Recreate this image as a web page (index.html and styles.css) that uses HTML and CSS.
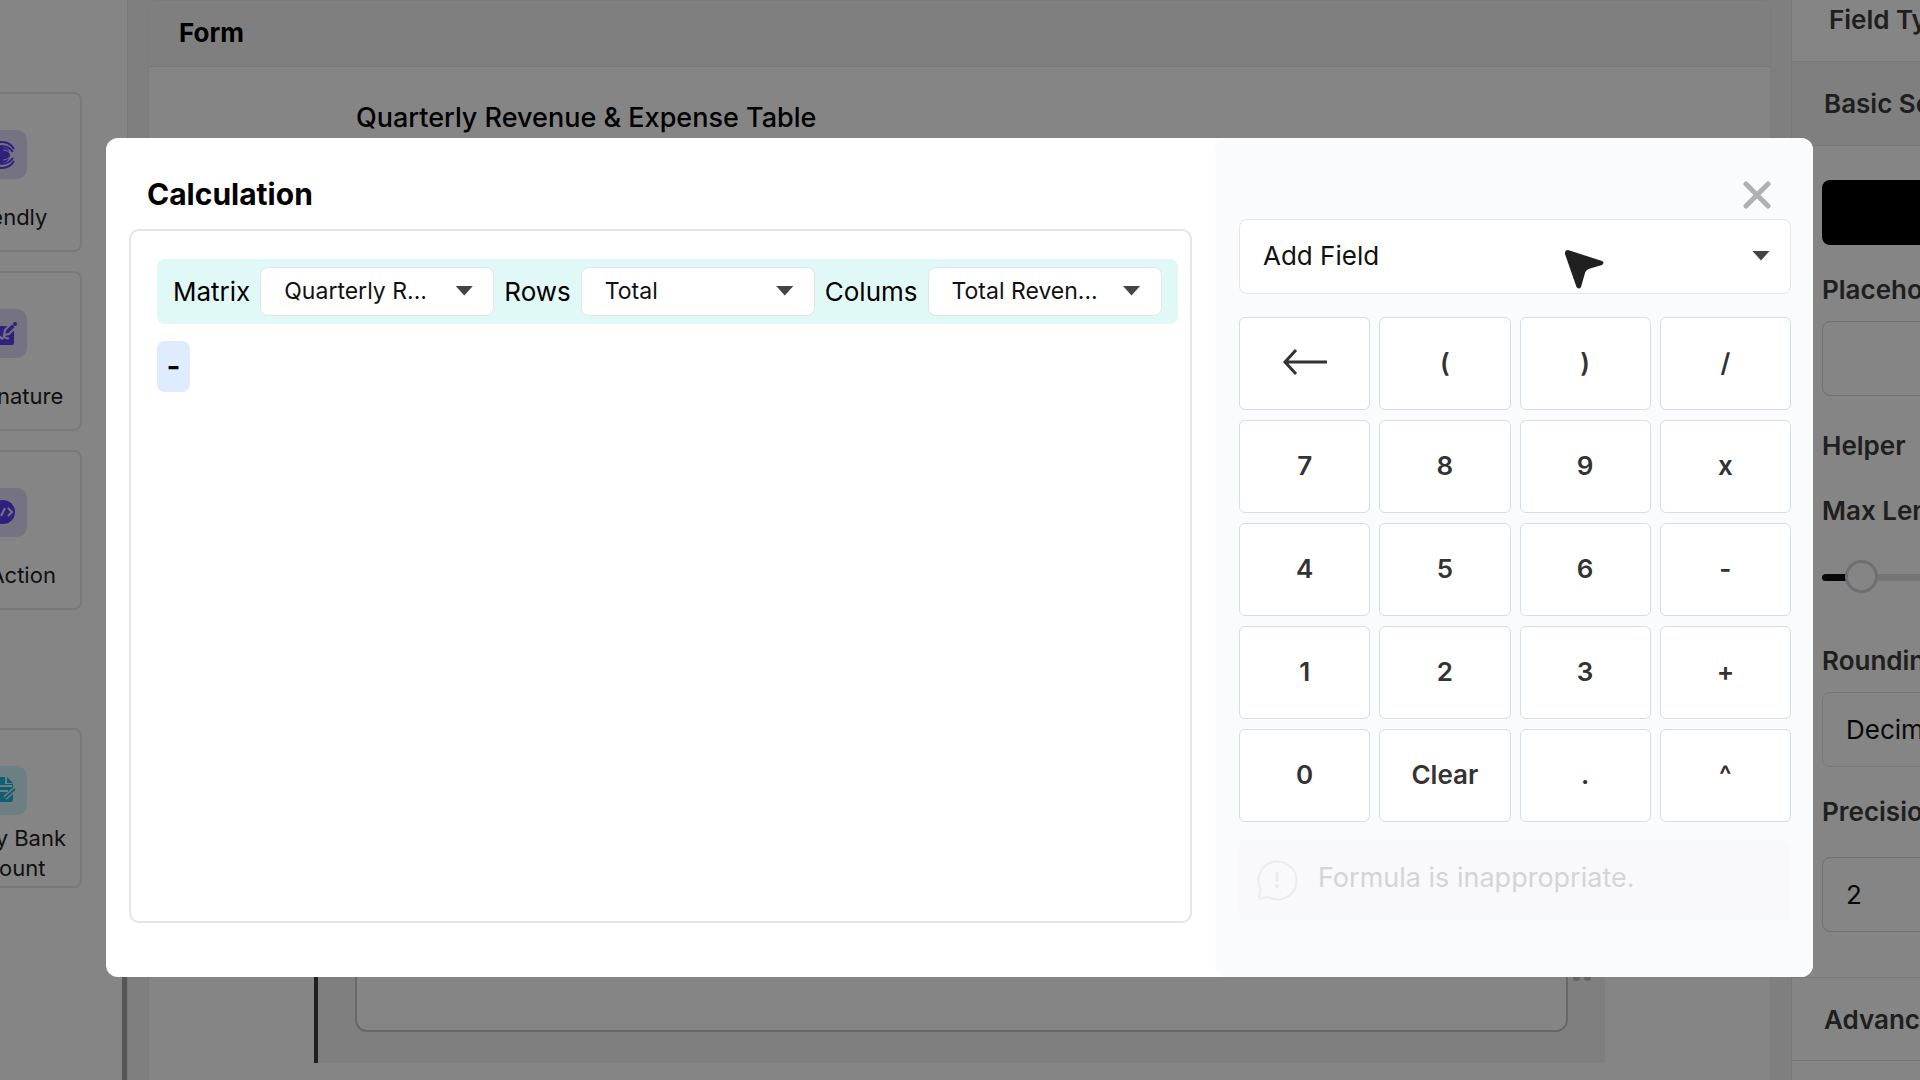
FILE: index.html
```html
<!DOCTYPE html>
<html lang="en">
<head>
    <meta charset="UTF-8">
    <meta name="viewport" content="width=device-width, initial-scale=1.0">
    <title>Form Builder - Calculation</title>
    <link rel="stylesheet" href="styles.css">
</head>
<body>
    <div class="builder">
        <aside class="widgets">
            <div class="widget">
                <span class="widget-icon">
                    <svg viewBox="0 0 49 49" width="49" height="49" fill="none" stroke="currentColor">
                        <circle cx="24" cy="25" r="8" fill="currentColor" stroke="none"/>
                        <path d="M36 19c-3-5-7-7-12-7-8 0-13 6-13 13s5 13 13 13c5 0 9-2 12-7" stroke-width="2"/>
                        <path d="M35 22c-3-4-6-6-11-6-6 0-9 4-9 9s3 9 9 9c5 0 8-2 11-6" stroke-width="2"/>
                        <path d="M37 23c-5 2-7-3-12-3M37 27c-5-2-7 3-12 3" stroke="#e1dafa" stroke-width="1"/>
                    </svg>
                </span>
                <span class="widget-name">Calendly</span>
            </div>
            <div class="widget">
                <span class="widget-icon">
                    <svg viewBox="0 0 49 49" width="49" height="49" fill="currentColor">
                        <path d="M10 17h26v17a2 2 0 0 1-2 2H12a2 2 0 0 1-2-2z"/>
                        <path d="M13 31c3-5 4 2 7-2s3 3 5 0 3 2 6 0" fill="none" stroke="#e1dafa" stroke-width="2"/>
                        <path d="M26 26l1-5 7-7 4 4-7 7z" stroke="#e1dafa" stroke-width="2"/>
                        <circle cx="37" cy="15" r="2"/>
                    </svg>
                </span>
                <span class="widget-name">E-Signature</span>
            </div>
            <div class="widget">
                <span class="widget-icon">
                    <svg viewBox="0 0 49 49" width="49" height="49" fill="none">
                        <circle cx="25" cy="24" r="12" fill="currentColor"/>
                        <path d="M19 20l-4 4 4 4M30 20l4 4-4 4M27 20l-4 8" stroke="#e1dafa" stroke-width="2"/>
                    </svg>
                </span>
                <span class="widget-name">API Action</span>
            </div>
            <div class="widget widget-payment">
                <span class="widget-icon">
                    <svg viewBox="0 0 49 49" width="49" height="49" fill="currentColor">
                        <path d="M13 11h14v7h8v15a3 3 0 0 1-3 3H13z"/>
                        <path d="M29 11l6 6h-6z"/>
                        <path d="M16 20h18M16 25h14M14 32h6v6" fill="none" stroke="#d4f4fc" stroke-width="2"/>
                        <path d="M27 32l10-9" stroke="#d4f4fc" stroke-width="5"/>
                        <path d="M27 32l10-9" stroke="currentColor" stroke-width="2"/>
                    </svg>
                </span>
                <span class="widget-name">Pay by Bank Account</span>
            </div>
            <div class="scroll-thumb"></div>
        </aside>

        <main class="form-card">
            <h2 class="form-header">Form</h2>
            <label class="form-title" for="answer">Quarterly Revenue &amp; Expense Table</label>
            <div class="form-field">
                <textarea id="answer" class="form-answer"></textarea>
                <div class="drag-dots"><i></i><i></i></div>
            </div>
        </main>

        <aside class="settings">
            <div class="settings-inner">
                <h3 class="settings-row settings-row-type">Field Type</h3>
                <h3 class="settings-row settings-row-active">Basic Settings</h3>
                <div class="settings-body">
                    <button type="button" class="calc-button" aria-label="Add Calculation"></button>
                    <label class="settings-label" for="placeholder">Placeholder</label>
                    <input type="text" id="placeholder" class="settings-input">
                    <span class="settings-label settings-helper">Helper</span>
                    <label class="settings-label" for="max_length">Max Length</label>
                    <input type="range" id="max_length" class="settings-range" min="0" max="100" value="7">
                    <label class="settings-label" for="rounding">Rounding</label>
                    <select id="rounding" class="settings-input settings-select">
                        <option>Decimal</option>
                    </select>
                    <label class="settings-label settings-precision" for="precision">Precision</label>
                    <input type="text" id="precision" class="settings-input" value="2">
                </div>
                <h3 class="settings-row settings-row-last">Advanced</h3>
            </div>
        </aside>
    </div>

    <div class="overlay">
        <div class="modal" role="dialog" aria-labelledby="modalTitle">
            <section class="editor">
                <h1 id="modalTitle">Calculation</h1>
                <div class="formula">
                    <div class="token-matrix">
                        <label for="matrix">Matrix</label>
                        <span class="picker">
                            <select id="matrix"><option>Quarterly R...</option></select>
                        </span>
                        <label for="rows">Rows</label>
                        <span class="picker">
                            <select id="rows"><option>Total</option></select>
                        </span>
                        <label for="columns">Colums</label>
                        <span class="picker">
                            <select id="columns"><option>Total Reven...</option></select>
                        </span>
                    </div>
                    <div class="token-operator">-</div>
                </div>
            </section>

            <section class="keypad">
                <button type="button" class="close" aria-label="Close">
                    <svg viewBox="0 0 28 28" width="28" height="28" fill="none" stroke="#b0b0b0" stroke-width="5" stroke-linecap="round">
                        <path d="M3 3l22 22M25 3L3 25"/>
                    </svg>
                </button>
                <div class="picker add-field">
                    <select aria-label="Add Field"><option>Add Field</option></select>
                    <svg class="cursor" viewBox="0 0 40 40" width="40" height="40" fill="#202020">
                        <path d="M3 0L37 11Q40 12.500 37 15L25 18.500Q21 19.500 20 23L16 37Q14 40 11.500 37L0 4Q-0.500 0 3 0z"/>
                    </svg>
                </div>
                <div class="keys">
                    <button type="button" aria-label="Backspace">
                        <svg viewBox="0 0 44 26" width="44" height="26" fill="none" stroke="#333" stroke-width="3">
                            <path d="M13 1L2 13l11 12M2 13h42"/>
                        </svg>
                    </button>
                    <button type="button">(</button>
                    <button type="button">)</button>
                    <button type="button">/</button>
                    <button type="button">7</button>
                    <button type="button">8</button>
                    <button type="button">9</button>
                    <button type="button">x</button>
                    <button type="button">4</button>
                    <button type="button">5</button>
                    <button type="button">6</button>
                    <button type="button">-</button>
                    <button type="button">1</button>
                    <button type="button">2</button>
                    <button type="button">3</button>
                    <button type="button">+</button>
                    <button type="button">0</button>
                    <button type="button">Clear</button>
                    <button type="button">.</button>
                    <button type="button">^</button>
                </div>
                <div class="message">
                    <svg viewBox="0 0 42 42" width="42" height="42" fill="none" stroke="#ebebed" stroke-width="2" stroke-linecap="round" stroke-linejoin="round">
                        <path d="M4 29A19 19 0 1 1 13 38.500C10 37 6 40 3.500 39.500C1.500 38.500 6 33 4 29z"/>
                        <path d="M21 14v8" stroke-width="3"/>
                        <circle cx="21" cy="27" r="1"/>
                    </svg>
                    <span>Formula is inappropriate.</span>
                </div>
            </section>
        </div>
    </div>
</body>
</html>
```
FILE: styles.css
```css
* {
    box-sizing: border-box;
}

body {
    font-family: Inter, "Liberation Sans", sans-serif;
    font-size: 26px;
    line-height: 32px;
    background-color: #f3f3f3;
    color: #000;
    margin: 0;
    height: 100vh;
    overflow: hidden;
}

h1,
h2,
h3 {
    margin: 0;
    font-size: 26px;
    font-weight: 600;
}

button,
input,
select,
textarea {
    font-family: inherit;
    font-size: 26px;
    color: inherit;
}

select {
    appearance: none;
}

.builder {
    display: grid;
    grid-template-columns: 128px 1fr 129px;
    gap: 20px;
    height: 100vh;
}

/* left column */
.widgets {
    display: flex;
    flex-direction: column;
    align-items: flex-end;
    gap: 19px;
    padding: 92px 45px 0 0;
    background-color: #fff;
    border-right: 1px solid #e8e8e8;
    overflow: hidden;
    position: relative;
}

.widget {
    display: flex;
    flex-direction: column;
    align-items: center;
    flex-shrink: 0;
    gap: 8px;
    width: 160px;
    height: 160px;
    padding-top: 36px;
    border: 2px solid #e8e8e8;
    border-radius: 8px;
}

.widget-payment {
    margin-top: 99px;
}

.widget-icon {
    display: flex;
    border-radius: 10px;
    background-color: #e1dafa;
    color: #5b3ff0;
}

.widget-payment .widget-icon {
    background-color: #d4f4fc;
    color: #22b4dc;
}

.widget-name {
    display: flex;
    align-items: center;
    height: 60px;
    width: 130px;
    justify-content: center;
    text-align: center;
    font-size: 22px;
    line-height: 30px;
    color: #222;
}

.scroll-thumb {
    position: absolute;
    right: 0;
    bottom: 0;
    width: 5px;
    height: 300px;
    background-color: #a5a5a5;
}

/* middle column */
.form-card {
    display: flex;
    flex-direction: column;
    padding-bottom: 17px;
    background-color: #fff;
    border: 1px solid #ebebeb;
    border-bottom: 0;
    border-radius: 8px 8px 0 0;
}

.form-header {
    padding: 16px 30px 17px;
    background-color: #f3f3f3;
    border-bottom: 1px solid #e5e5e5;
    font-weight: 700;
}

.form-title {
    padding: 35px 207px 0;
    font-size: 27px;
    font-weight: 500;
}

.form-field {
    position: relative;
    height: 400px;
    margin: auto 165px 0;
    padding: 0 37px 31px;
    background-color: #f3f3f3;
    border-left: 4px solid #3c3c3c;
}

.form-answer {
    display: block;
    width: 100%;
    height: 100%;
    resize: none;
    background-color: #fff;
    border: 2px solid #c8c8cc;
    border-radius: 12px;
}

.drag-dots {
    position: absolute;
    right: 14px;
    bottom: 82px;
    display: flex;
    gap: 4px;
}

.drag-dots i {
    width: 7px;
    height: 7px;
    border-radius: 50%;
    background-color: #c0c0c0;
}

/* right column */
.settings {
    overflow: hidden;
    background-color: #fff;
    border-left: 1px solid #e5e5e5;
    color: #3c3c3c;
}

.settings-inner {
    width: 420px;
    margin-top: -22px;
}

.settings-row {
    height: 84px;
    padding: 26px 32px;
    border-bottom: 1px solid #e5e5e5;
}

.settings-row-type {
    padding-left: 37px;
}

.settings-row-active {
    background-color: #f3f3f3;
}

.settings-row-last {
    border-top: 1px solid #e5e5e5;
}

.settings-body {
    display: flex;
    flex-direction: column;
    padding: 34px 30px 45px;
}

.calc-button {
    height: 65px;
    margin-bottom: 29px;
    background-color: #000;
    border: none;
    border-radius: 8px;
}

.settings-label {
    margin-bottom: 15px;
    font-weight: 600;
}

.settings-input {
    height: 75px;
    margin-bottom: 29px;
    padding: 0 23px;
    background-color: #fff;
    border: 1px solid #d1d5db;
    border-radius: 8px;
    color: #111;
}

.settings-select {
    border-color: #e5e5e5;
}

.settings-helper {
    margin: 5px 0 33px;
}

.settings-range {
    appearance: none;
    height: 33px;
    margin: 19px 0 51px;
    background: none;
}

.settings-range::-webkit-slider-runnable-track {
    height: 7px;
    border-radius: 4px;
    background: linear-gradient(to right, #111 30px, #e0e0e0 30px);
}

.settings-range::-webkit-slider-thumb {
    appearance: none;
    width: 33px;
    height: 33px;
    margin-top: -14px;
    background-color: #fff;
    border: 3px solid #d1d5db;
    border-radius: 50%;
}

.settings-precision {
    margin-bottom: 29px;
}

.settings-body .settings-input:last-child {
    margin-bottom: 0;
}

/* calculation modal */
.overlay {
    position: fixed;
    inset: 0;
    display: flex;
    align-items: flex-start;
    padding: 138px 107px 0 106px;
    background-color: rgba(0, 0, 0, 0.48);
}

.modal {
    display: flex;
    flex: 1;
    background-color: #fff;
    border-radius: 12px;
}

.editor {
    display: flex;
    flex-direction: column;
    flex: 1;
    padding: 38px 23px 54px;
}

.editor h1 {
    padding: 0 18px;
    margin-bottom: 17px;
    font-size: 30px;
    font-weight: 700;
    line-height: 36px;
}

.formula {
    flex: 1;
    padding: 28px 12px 28px 26px;
    border: 2px solid #e5e5e5;
    border-radius: 10px;
}

.token-matrix {
    display: inline-flex;
    align-items: center;
    gap: 10px;
    padding: 8px 16px;
    background-color: #e0f9f6;
    border-radius: 8px;
}

.picker {
    position: relative;
    display: flex;
}

.picker::after {
    content: "";
    position: absolute;
    right: 21px;
    top: 50%;
    width: 18px;
    height: 10px;
    margin-top: -6px;
    background-color: #444;
    clip-path: polygon(0 0, 100% 0, 50% 100%);
    pointer-events: none;
}

.picker select {
    width: 234px;
    height: 49px;
    padding: 0 23px 2px;
    background-color: #fff;
    border: 1px solid #e5e5e8;
    border-radius: 8px;
    font-size: 23px;
    color: #111;
}

.token-operator {
    display: flex;
    justify-content: center;
    width: 33px;
    margin-top: 17px;
    padding: 9px 0 10px;
    background-color: #dfecfe;
    border-radius: 8px;
    font-size: 30px;
    font-weight: 600;
}

.keypad {
    width: 598px;
    padding: 43px 22px 56px 24px;
    background-color: #fafbfd;
    border-radius: 12px;
}

.close {
    display: block;
    margin: 0 20px 10px auto;
    padding: 0;
    height: 28px;
    background: none;
    border: none;
    cursor: pointer;
}

.picker.add-field select {
    width: 100%;
    height: 75px;
    font-size: 26px;
}

.cursor {
    position: absolute;
    right: 186px;
    top: 31px;
}

.keys {
    display: grid;
    grid-template-columns: repeat(4, 1fr);
    gap: 10px 9px;
    margin: 23px 0 20px;
}

.keys button {
    display: flex;
    align-items: center;
    justify-content: center;
    height: 93px;
    padding: 0 0 3px;
    background-color: #fff;
    border: 1px solid #d5dde8;
    border-radius: 6px;
    color: #333;
    font-weight: 600;
    cursor: pointer;
}

.message {
    display: flex;
    align-items: center;
    gap: 20px;
    height: 79px;
    padding: 0 17px 4px;
    background-color: #f9f9fb;
    border-radius: 8px;
    color: #d4d4d6;
}

.message span {
    padding-bottom: 4px;
    font-size: 27px;
}
```
